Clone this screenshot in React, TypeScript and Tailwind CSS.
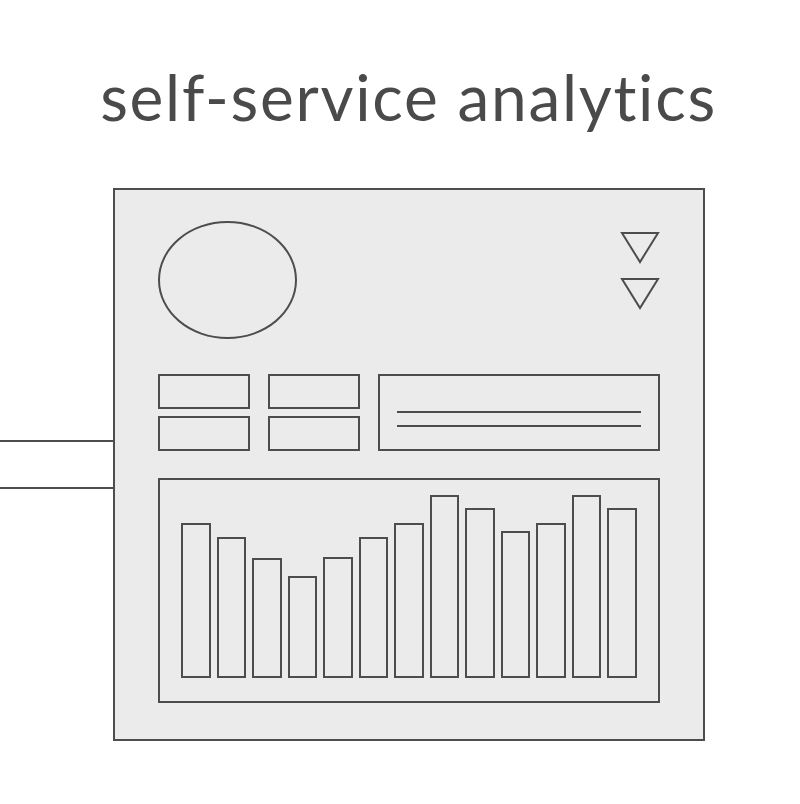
const bars = [155, 141, 120, 102, 121, 141, 155, 183, 170, 147, 155, 183, 170];

export default function App() {
  return (
    <div className="w-[800px] h-[804px] bg-white overflow-hidden" style={{ fontFamily: 'Lato, "Noto Sans", sans-serif' }}>
      {/* Title */}
      <div className="pt-[65px] pl-[17px] text-center">
        <h1 className="text-[64px] leading-[64px] tracking-[1.7px] text-[#4a4a4a] font-normal [font-variant-ligatures:none]">
          self-service analytics
        </h1>
      </div>

      <div className="flex mt-[59px]">
        {/* connector lines */}
        <div className="w-[113px] flex flex-col pt-[252px] gap-[45px]">
          <div className="h-[2px] bg-[#4d4d4d]" />
          <div className="h-[2px] bg-[#4d4d4d]" />
        </div>

        {/* Dashboard panel */}
        <div className="w-[592px] h-[553px] border-2 border-[#4d4d4d] bg-[#ebebeb] pt-[31px] px-[43px] flex flex-col">
          <div className="flex justify-between items-start">
            <div className="w-[139px] h-[118px] rounded-[50%] border-2 border-[#4d4d4d]" />
            <svg width="40" height="80" viewBox="0 0 40 80" className="mt-[10px]">
              <polygon points="2,2 38,2 20,31" fill="none" stroke="#4d4d4d" strokeWidth="2" />
              <polygon points="2,48 38,48 20,77" fill="none" stroke="#4d4d4d" strokeWidth="2" />
            </svg>
          </div>

          <div className="flex mt-[35px] gap-[18px]">
            <div className="grid grid-cols-2 grid-rows-2 gap-x-[18px] gap-y-[7px]">
              <div className="w-[92px] h-[35px] border-2 border-[#4d4d4d]" />
              <div className="w-[92px] h-[35px] border-2 border-[#4d4d4d]" />
              <div className="w-[92px] h-[35px] border-2 border-[#4d4d4d]" />
              <div className="w-[92px] h-[35px] border-2 border-[#4d4d4d]" />
            </div>
            <div className="flex-1 h-[77px] border-2 border-[#4d4d4d] pt-[35px] px-[17px] flex flex-col gap-[12px]">
              <div className="h-[2px] bg-[#4d4d4d]" />
              <div className="h-[2px] bg-[#4d4d4d]" />
            </div>
          </div>

          <div className="mt-[27px] h-[225px] border-2 border-[#4d4d4d] pl-[21px] pr-[21px] pb-[23px] flex items-end gap-[6px]">
            {bars.map((h, i) => (
              <div key={i} className="w-[29.5px] border-2 border-[#4d4d4d]" style={{ height: h }} />
            ))}
          </div>
        </div>
      </div>
    </div>
  );
}
